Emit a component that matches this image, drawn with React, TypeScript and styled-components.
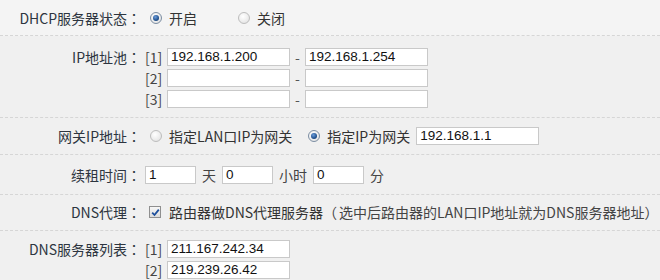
import styled, {createGlobalStyle} from "styled-components";

const GlobalStyle = createGlobalStyle`
  html, body {
    margin: 0;
    padding: 0;
    background: #f0f0f0;
  }
  body {
    font-family: "Noto Sans CJK SC", "Liberation Sans", sans-serif;
    font-size: 14px;
    color: #333;
  }
`;

const Form = styled.div`
  width: 660px;
  height: 280px;
  overflow: hidden;
  background: #f0f0f0;
`;

const Row = styled.div<{$pt: number; $pb: number; $bg?: string}>`
  display: grid;
  grid-template-columns: 141px 1fr;
  column-gap: 4px;
  padding: ${p => p.$pt}px 0 ${p => p.$pb}px 0;
  background: ${p => p.$bg || "#f0f0f0"};
  border-bottom: 1px dashed #d6d6d6;

  &:last-child {
    border-bottom: none;
  }
`;

const Label = styled.div`
  text-align: right;
  line-height: 18px;
  height: 18px;
  white-space: nowrap;
  color: #2d3540;
`;

// full-width punctuation centred in its box, as in the reference font
const Punct = styled.span<{$pad?: string}>`
  font-family: "Noto Sans CJK TC", "Noto Sans CJK SC", sans-serif;
  padding: ${p => p.$pad || "0"};
`;

const Lines = styled.div`
  display: flex;
  flex-direction: column;
  gap: 3px;
`;

const Line = styled.div`
  display: flex;
  align-items: center;
  height: 18px;
  white-space: nowrap;
`;

const Index = styled.span`
  width: 17px;
  margin-right: 5px;
  color: #444;
`;

const TextInput = styled.div<{$w: number}>`
  box-sizing: border-box;
  width: ${p => p.$w}px;
  height: 18px;
  border: 1px solid #c9c9c9;
  background: #fff;
  font-family: "Liberation Sans", Arial, sans-serif;
  font-size: 13.5px;
  line-height: 16px;
  padding-left: 3px;
  color: #111;
`;

const Dash = styled.span`
  width: 15px;
  text-align: center;
  color: #555;
`;

const Unit = styled.span`
  margin: 0 6px;
  color: #444;
`;

const Option = styled.span<{$gap?: number}>`
  display: inline-flex;
  align-items: center;
  margin-right: ${p => p.$gap || 0}px;
`;

const Radio = styled.span<{$on?: boolean}>`
  position: relative;
  box-sizing: border-box;
  width: 12px;
  height: 12px;
  margin: 0 7px 0 5px;
  border-radius: 50%;
  border: 1px solid ${p => (p.$on ? "#7c8ea3" : "#bdbdbd")};
  background: radial-gradient(circle at 40% 35%, #ffffff 0%, #e8e8e8 70%, #d4d4d4 100%);

  &::after {
    content: "";
    display: ${p => (p.$on ? "block" : "none")};
    position: absolute;
    left: 2px;
    top: 2px;
    width: 6px;
    height: 6px;
    border-radius: 50%;
    background: radial-gradient(circle at 40% 35%, #6c9ddb 0%, #22528f 60%, #183a66 100%);
  }
`;

const Check = styled.span`
  display: inline-flex;
  box-sizing: border-box;
  width: 12px;
  height: 12px;
  margin: 0 8px 0 4px;
  border: 1px solid #8f8f8f;
  background: linear-gradient(#f7f7f7, #dcdcdc);
  align-items: center;
  justify-content: center;
`;

const Note = styled.span`
  color: #444;
`;

const colon = <Punct>：</Punct>;

function App() {
    return (
        <Form>
            <GlobalStyle />
            <Row $pt={9} $pb={8} $bg="#f4f4f4">
                <Label>DHCP服务器状态{colon}</Label>
                <Line>
                    <Option $gap={36}><Radio $on />开启</Option>
                    <Option><Radio />关闭</Option>
                </Line>
            </Row>

            <Row $pt={12} $pb={9}>
                <Label>IP地址池{colon}</Label>
                <Lines>
                    <Line>
                        <Index>[1]</Index>
                        <TextInput $w={123}>192.168.1.200</TextInput>
                        <Dash>-</Dash>
                        <TextInput $w={123}>192.168.1.254</TextInput>
                    </Line>
                    <Line>
                        <Index>[2]</Index>
                        <TextInput $w={123} />
                        <Dash>-</Dash>
                        <TextInput $w={123} />
                    </Line>
                    <Line>
                        <Index>[3]</Index>
                        <TextInput $w={123} />
                        <Dash>-</Dash>
                        <TextInput $w={123} />
                    </Line>
                </Lines>
            </Row>

            <Row $pt={9} $pb={9}>
                <Label>网关IP地址{colon}</Label>
                <Line>
                    <Option $gap={11}><Radio />指定LAN口IP为网关</Option>
                    <Option $gap={6}><Radio $on />指定IP为网关</Option>
                    <TextInput $w={123}>192.168.1.1</TextInput>
                </Line>
            </Row>

            <Row $pt={11} $pb={10}>
                <Label>续租时间{colon}</Label>
                <Line>
                    <TextInput $w={51}>1</TextInput>
                    <Unit>天</Unit>
                    <TextInput $w={51}>0</TextInput>
                    <Unit>小时</Unit>
                    <TextInput $w={51}>0</TextInput>
                    <Unit>分</Unit>
                </Line>
            </Row>

            <Row $pt={8} $pb={9}>
                <Label>DNS代理{colon}</Label>
                <Line>
                    <Check>
                        <svg width="9" height="9" viewBox="0 0 9 9">
                            <path d="M1.2 4.6 L3.5 7 L7.8 1.6" fill="none" stroke="#1d4f9c" strokeWidth="1.8" />
                        </svg>
                    </Check>
                    路由器做DNS代理服务器
                    <Note>
                        <Punct $pad="0 2px 0 0">（</Punct>选中后路由器的LAN口IP地址就为DNS服务器地址<Punct>）</Punct>
                    </Note>
                </Line>
            </Row>

            <Row $pt={9} $pb={9}>
                <Label>DNS服务器列表{colon}</Label>
                <Lines>
                    <Line>
                        <Index>[1]</Index>
                        <TextInput $w={123}>211.167.242.34</TextInput>
                    </Line>
                    <Line>
                        <Index>[2]</Index>
                        <TextInput $w={123}>219.239.26.42</TextInput>
                    </Line>
                </Lines>
            </Row>
        </Form>
    );
}

export default App;
